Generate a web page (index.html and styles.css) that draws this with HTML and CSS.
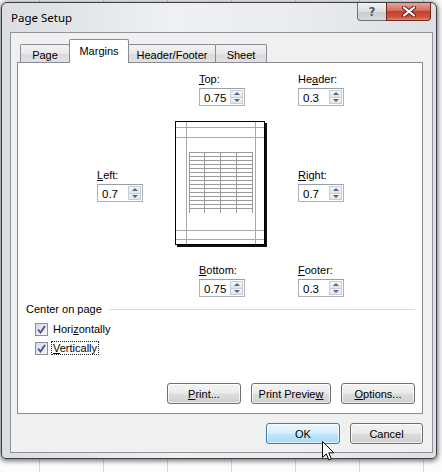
FILE: index.html
```html
<!DOCTYPE html>
<html>
  <head>
    <title>Page Setup</title>
    <meta charset="utf-8"/>
    <link rel="stylesheet" href="styles.css">
  </head>
  <body>
    <div class="window">
      <div class="titlebar">
        <span class="title">Page Setup</span>
        <div class="caption-btns">
          <span class="cap help">?</span>
          <span class="cap close">
            <svg width="14" height="11" viewBox="0 0 14 11">
              <path d="M2 1.5 L12 9.5 M12 1.5 L2 9.5" stroke="#5b2019" stroke-width="4" stroke-linecap="round"/>
              <path d="M2 1.5 L12 9.5 M12 1.5 L2 9.5" stroke="#fff" stroke-width="2.2" stroke-linecap="round"/>
            </svg>
          </span>
        </div>
      </div>

      <div class="client">
        <div class="tabs">
          <span class="tab">Page</span>
          <span class="tab selected">Margins</span>
          <span class="tab">Header/Footer</span>
          <span class="tab">Sheet</span>
        </div>

        <div class="panel">
          <div class="margins">
            <div class="field f-top">
              <label><u>T</u>op:</label>
              <div class="spin"><span class="val">0.75</span><span class="arrows"><i class="up"></i><i class="down"></i></span></div>
            </div>
            <div class="field f-header">
              <label>He<u>a</u>der:</label>
              <div class="spin"><span class="val">0.3</span><span class="arrows"><i class="up"></i><i class="down"></i></span></div>
            </div>

            <div class="field f-left">
              <label><u>L</u>eft:</label>
              <div class="spin"><span class="val">0.7</span><span class="arrows"><i class="up"></i><i class="down"></i></span></div>
            </div>
            <div class="preview">
              <svg width="92" height="126" viewBox="0 0 92 126" shape-rendering="crispEdges">
                <rect x="0" y="0" width="90" height="124" fill="#fff"/>
                <g stroke="#a8a8a8" stroke-width="1">
                  <line x1="11.5" y1="1" x2="11.5" y2="123"/>
                  <line x1="80.5" y1="1" x2="80.5" y2="123"/>
                  <line x1="1" y1="6.5" x2="89" y2="6.5"/>
                  <line x1="1" y1="16.5" x2="89" y2="16.5"/>
                  <line x1="1" y1="109.5" x2="89" y2="109.5"/>
                  <line x1="1" y1="118.5" x2="89" y2="118.5"/>
                </g>
                <g stroke="#9a9a9a" stroke-width="1">
                  <line x1="14.5" y1="31" x2="14.5" y2="92"/>
                  <line x1="29.5" y1="31" x2="29.5" y2="92"/>
                  <line x1="45.5" y1="31" x2="45.5" y2="92"/>
                  <line x1="61.5" y1="31" x2="61.5" y2="92"/>
                  <line x1="77.5" y1="31" x2="77.5" y2="92"/>
                  <line x1="14" y1="31.5" x2="78" y2="31.5"/>
                  <line x1="14" y1="35.5" x2="78" y2="35.5"/>
                  <line x1="14" y1="39.5" x2="78" y2="39.5"/>
                  <line x1="14" y1="43.5" x2="78" y2="43.5"/>
                  <line x1="14" y1="47.5" x2="78" y2="47.5"/>
                  <line x1="14" y1="51.5" x2="78" y2="51.5"/>
                  <line x1="14" y1="55.5" x2="78" y2="55.5"/>
                  <line x1="14" y1="59.5" x2="78" y2="59.5"/>
                  <line x1="14" y1="63.5" x2="78" y2="63.5"/>
                  <line x1="14" y1="67.5" x2="78" y2="67.5"/>
                  <line x1="14" y1="71.5" x2="78" y2="71.5"/>
                  <line x1="14" y1="75.5" x2="78" y2="75.5"/>
                  <line x1="14" y1="79.5" x2="78" y2="79.5"/>
                  <line x1="14" y1="83.5" x2="78" y2="83.5"/>
                  <line x1="14" y1="87.5" x2="78" y2="87.5"/>
                </g>
                <rect x="0.5" y="0.5" width="89" height="123" fill="none" stroke="#000"/>
                <rect x="90" y="2" width="2" height="124" fill="#111"/>
                <rect x="2" y="124" width="90" height="2" fill="#111"/>
              </svg>
            </div>
            <div class="field f-right">
              <label><u>R</u>ight:</label>
              <div class="spin"><span class="val">0.7</span><span class="arrows"><i class="up"></i><i class="down"></i></span></div>
            </div>

            <div class="field f-bottom">
              <label><u>B</u>ottom:</label>
              <div class="spin"><span class="val">0.75</span><span class="arrows"><i class="up"></i><i class="down"></i></span></div>
            </div>
            <div class="field f-footer">
              <label><u>F</u>ooter:</label>
              <div class="spin"><span class="val">0.3</span><span class="arrows"><i class="up"></i><i class="down"></i></span></div>
            </div>
          </div>

          <div class="center-on">
            <div class="group-title"><span>Center on page</span><span class="rule"></span></div>
            <div class="checks">
              <div class="check"><span class="box"><svg width="9" height="9" viewBox="0 0 9 9"><path d="M1 4.5 L3.5 7.5 L8 1" fill="none" stroke="#3f5688" stroke-width="1.8"/></svg></span><span class="lbl">Hori<u>z</u>ontally</span></div>
              <div class="check"><span class="box"><svg width="9" height="9" viewBox="0 0 9 9"><path d="M1 4.5 L3.5 7.5 L8 1" fill="none" stroke="#3f5688" stroke-width="1.8"/></svg></span><span class="lbl focus"><u>V</u>ertically</span></div>
            </div>
          </div>

          <div class="panel-buttons">
            <span class="btn"><u>P</u>rint...</span>
            <span class="btn wide">Print Previe<u>w</u></span>
            <span class="btn"><u>O</u>ptions...</span>
          </div>
        </div>

        <div class="dialog-buttons">
          <span class="btn default">OK</span>
          <span class="btn">Cancel</span>
        </div>
      </div>
    </div>

    <svg class="cursor" width="13" height="21" viewBox="0 0 13 21">
      <path d="M0.5 0.5 L0.5 16.5 L4.3 12.8 L6.8 18.8 L9.3 17.8 L6.8 11.8 L11.8 11.8 Z" fill="#fff" stroke="#000" stroke-width="1" stroke-linejoin="miter"/>
    </svg>
  </body>
</html>
```

FILE: styles.css
```css
html, body {
  height: 100%;
}
body {
  margin: 0;
  font-family: "Liberation Sans", Arial, sans-serif;
  font-size: 11px;
  color: #000;
  background-color: #fbfbfb;
  background-image: repeating-linear-gradient(90deg, transparent 0, transparent 38px, #d4d7db 38px, #d4d7db 39px, transparent 39px, transparent 64px);
  background-position: 1px 0;
  overflow: hidden;
}
u {
  text-decoration: underline;
  text-underline-offset: 1px;
}

/* window frame */
.window {
  box-sizing: border-box;
  width: 436px;
  height: 457px;
  margin: 2px 0 0 1px;
  border: 1px solid #3d3f42;
  border-radius: 6px 6px 5px 5px;
  background: linear-gradient(90deg, #dadde1, #eef0f2 40%, #e9ebee 70%, #dcdfe3);
  box-shadow: 0 1px 5px 1px rgba(0, 0, 0, 0.55);
  padding: 0 3px 5px 8px;
  display: flex;
  flex-direction: column;
}
.titlebar {
  height: 29px;
  display: flex;
  align-items: center;
  margin-left: -8px;
  margin-right: -3px;
  padding-left: 9px;
}
.title {
  flex: 1;
  font-family: "Noto Sans", "Liberation Sans", sans-serif;
  font-size: 11.5px;
}
.caption-btns {
  align-self: flex-start;
  display: flex;
  margin-right: 5px;
}
.cap {
  box-sizing: border-box;
  height: 18px;
  display: flex;
  align-items: center;
  justify-content: center;
  border: 1px solid #6f7276;
  border-top: none;
}
.help {
  width: 29px;
  border-radius: 0 0 0 4px;
  border-right: none;
  background: linear-gradient(#f2f3f4, #dcdee1 50%, #c9cccf 51%, #d6d8db);
  color: #555;
  font-family: "DejaVu Sans", sans-serif;
  font-size: 12px;
  font-weight: bold;
  text-shadow: 0 0 1px #fff;
}
.close {
  width: 45px;
  border-radius: 0 0 4px 0;
  border-color: #6a2a22;
  background: linear-gradient(#e8a595, #d26b5c 45%, #c2412f 50%, #d2563f 85%, #e28b6f);
}

/* client area */
.client {
  flex: 1;
  border: 1px solid #8f9297;
  background: #f0f0f0;
  padding: 6px 9px 8px 6px;
  display: flex;
  flex-direction: column;
}
.tabs {
  display: flex;
  align-items: flex-end;
  padding-left: 3px;
  margin-bottom: -1px;
  position: relative;
  z-index: 1;
}
.tab {
  box-sizing: border-box;
  height: 18px;
  margin-bottom: 1px;
  border: 1px solid #898c95;
  border-bottom: none;
  border-radius: 2px 2px 0 0;
  background: linear-gradient(#f2f2f2, #e9e9e9 50%, #dcdcdc 51%, #e0e0e0);
  display: flex;
  align-items: center;
  justify-content: center;
  padding-top: 2px;
}
.tab + .tab {
  margin-left: -1px;
}
.tab:nth-child(1) { width: 50px; }
.tab:nth-child(2) { width: 60px; }
.tab:nth-child(3) { width: 88px; }
.tab:nth-child(4) { width: 52px; }
.tab.selected {
  height: 24px;
  margin-bottom: 0;
  background: #fff;
  padding-top: 0;
  padding-bottom: 2px;
}

.panel {
  flex: 1;
  border: 1px solid #898c95;
  background: #fff;
  display: flex;
  flex-direction: column;
  padding: 8px 7px 9px 0;
}

/* margin fields around the page preview */
.margins {
  display: grid;
  grid-template-columns: 47px 92px 47px;
  grid-template-rows: auto 126px auto;
  column-gap: 31px;
  row-gap: 15px;
  padding-left: 79px;
}
.field label {
  display: block;
  height: 16px;
  line-height: 16px;
  margin-bottom: 1px;
}
.f-top { grid-column: 2; grid-row: 1; justify-self: center; margin-left: 2px; }
.f-header { grid-column: 3; grid-row: 1; }
.f-left { grid-column: 1; grid-row: 2; align-self: center; margin-top: 1px; }
.preview { grid-column: 2; grid-row: 2; }
.f-right { grid-column: 3; grid-row: 2; align-self: center; margin-top: 1px; }
.f-bottom { grid-column: 2; grid-row: 3; justify-self: center; margin-left: 2px; }
.f-footer { grid-column: 3; grid-row: 3; }
.preview svg {
  display: block;
}

.spin {
  box-sizing: border-box;
  width: 46px;
  height: 18px;
  border: 1px solid #aeb2b8;
  border-top-color: #9a9ea5;
  display: flex;
  align-items: center;
  justify-content: space-between;
  background: #fff;
}
.val {
  padding-left: 4px;
  padding-top: 1px;
  font-size: 11.5px;
}
.arrows {
  width: 13px;
  height: 14px;
  margin-right: 1px;
  display: flex;
  flex-direction: column;
}
.arrows i {
  flex: 1;
  box-sizing: border-box;
  border: 1px solid #c8ced8;
  background: linear-gradient(#f4f6f9, #e1e5eb);
  display: flex;
  align-items: center;
  justify-content: center;
}
.arrows i + i {
  border-top: none;
}
.arrows i::after {
  content: "";
  border-left: 3px solid transparent;
  border-right: 3px solid transparent;
}
.arrows .up::after {
  border-bottom: 3px solid #56667f;
}
.arrows .down::after {
  border-top: 3px solid #56667f;
}

/* center on page */
.center-on {
  margin-top: 5px;
  padding-left: 8px;
}
.group-title {
  display: flex;
  align-items: center;
  height: 14px;
}
.group-title .rule {
  flex: 1;
  height: 1px;
  background: #d5dce2;
  margin-left: 7px;
}
.checks {
  margin-top: 6px;
  padding-left: 9px;
  display: flex;
  flex-direction: column;
  gap: 5px;
}
.check {
  display: flex;
  align-items: center;
  height: 14px;
}
.box {
  box-sizing: border-box;
  width: 13px;
  height: 13px;
  border: 1px solid #8e8f8f;
  background: linear-gradient(135deg, #d8dde4, #f4f6f8);
  display: flex;
  align-items: center;
  justify-content: center;
  margin-right: 3px;
}
.lbl {
  padding: 0 1px;
  border: 1px dotted transparent;
  line-height: 12px;
}
.lbl.focus {
  border-color: #222;
}

/* buttons */
.panel-buttons {
  margin-top: auto;
  display: flex;
  justify-content: flex-end;
  gap: 10px;
}
.dialog-buttons {
  margin-top: 9px;
  display: flex;
  justify-content: flex-end;
  gap: 10px;
}
.btn {
  box-sizing: border-box;
  width: 74px;
  height: 21px;
  border: 1px solid #707070;
  border-radius: 3px;
  background: linear-gradient(#f3f3f3, #ebebeb 48%, #dddddd 52%, #cfcfcf);
  box-shadow: inset 0 0 0 1px rgba(255, 255, 255, 0.7);
  display: flex;
  align-items: center;
  justify-content: center;
  padding-top: 1px;
}
.btn.wide {
  width: 80px;
}
.dialog-buttons .btn + .btn {
  width: 73px;
}
.btn.default {
  border-color: #3c7fb1;
  background: linear-gradient(#eaf6fd, #d9f0fc 48%, #bee6fd 52%, #a7d9f5);
  box-shadow: inset 0 0 0 1px rgba(255, 255, 255, 0.6);
}

.cursor {
  position: absolute;
  left: 322px;
  top: 441px;
}
```
